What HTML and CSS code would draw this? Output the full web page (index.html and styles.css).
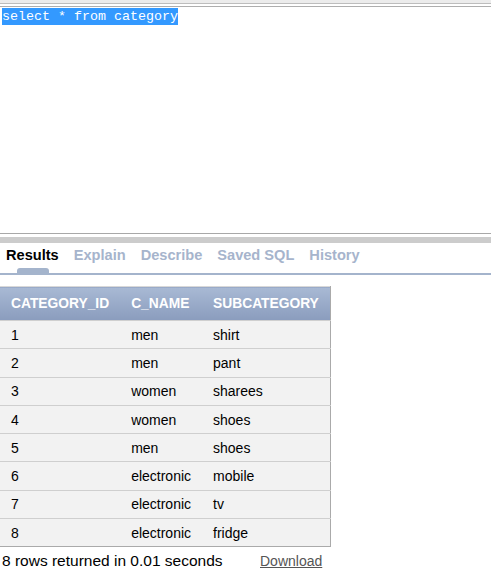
FILE: index.html
```html
<!DOCTYPE html>
<html>
<head>
<meta charset="utf-8">
<link rel="stylesheet" href="styles.css">
</head>
<body>
<div class="editor">
  <div class="editor-top"></div>
  <div class="code"><span class="sel">select * from category</span></div>
</div>
<div class="splitter"></div>
<div class="tabs">
  <span class="tab active">Results</span>
  <span class="tab">Explain</span>
  <span class="tab">Describe</span>
  <span class="tab">Saved SQL</span>
  <span class="tab">History</span>
</div>
<div class="results">
  <table class="grid">
    <thead>
      <tr><th>CATEGORY_ID</th><th>C_NAME</th><th>SUBCATEGORY</th></tr>
    </thead>
    <tbody>
      <tr><td>1</td><td>men</td><td>shirt</td></tr>
      <tr><td>2</td><td>men</td><td>pant</td></tr>
      <tr><td>3</td><td>women</td><td>sharees</td></tr>
      <tr><td>4</td><td>women</td><td>shoes</td></tr>
      <tr><td>5</td><td>men</td><td>shoes</td></tr>
      <tr><td>6</td><td>electronic</td><td>mobile</td></tr>
      <tr><td>7</td><td>electronic</td><td>tv</td></tr>
      <tr><td>8</td><td>electronic</td><td>fridge</td></tr>
    </tbody>
  </table>
  <div class="footer">
    <span class="count">8 rows returned in 0.01 seconds</span>
    <a class="download" href="#">Download</a>
  </div>
</div>
</body>
</html>
```
FILE: styles.css
```css
html, body {
  margin: 0;
  padding: 0;
  background: #fff;
  font-family: "Liberation Sans", Arial, sans-serif;
}
.editor {
  height: 233px;
  border-bottom: 1px solid #a8a8a8;
  box-sizing: content-box;
}
.editor-top {
  height: 3px;
  background: #ececec;
  border-bottom: 1px solid #bdbdbd;
  box-shadow: 0 2px 0 #fff, 0 3px 0 #aeaeae;
  margin-bottom: 5px;
}
.code {
  padding-left: 2px;
  font-family: "Liberation Mono", "Courier New", monospace;
  font-size: 13.33px;
  line-height: 16px;
}
.sel {
  background: #3399ff;
  color: #fff;
  padding: 1px 0;
}
.splitter {
  margin-top: 3px;
  height: 6px;
  background: #cccccc;
}
.tabs {
  display: flex;
  gap: 15px;
  padding: 4px 0 0 6px;
  height: 26px;
  box-sizing: content-box;
  border-bottom: 2px solid #a4b4cc;
}
.tab {
  position: relative;
  font-weight: bold;
  font-size: 14.6px;
  line-height: 16px;
  color: #a6b4cc;
}
.tab.active {
  color: #000;
}
.tab.active::after {
  content: "";
  position: absolute;
  left: 11px;
  top: 21px;
  width: 32px;
  height: 5px;
  background: #a4b4cc;
  border-radius: 3px 3px 0 0;
}
.results {
  padding-top: 11px;
}
.grid {
  border-collapse: collapse;
  font-size: 14px;
  border-right: 1px solid #aaaaaa;
  border-bottom: 1px solid #aaaaaa;
  border-top: 1px solid #d8d8d8;
}
.grid th {
  background: linear-gradient(#a8b9d4, #8a9cbd);
  color: #fff;
  font-weight: bold;
  font-size: 13.8px;
  text-align: left;
  padding: 0 11px;
  height: 33px;
  white-space: nowrap;
}
.grid td {
  background: #f2f2f2;
  padding: 0 11px;
  height: 27.3px;
  border-top: 1px solid #cfcfcf;
  color: #000;
}
.footer {
  display: flex;
  align-items: baseline;
  padding: 5px 0 0 2px;
  font-size: 15.5px;
  line-height: 18px;
}
.count {
  color: #000;
  width: 258px;
}
.download {
  color: #555;
  font-size: 14px;
  text-decoration: underline;
}
```
